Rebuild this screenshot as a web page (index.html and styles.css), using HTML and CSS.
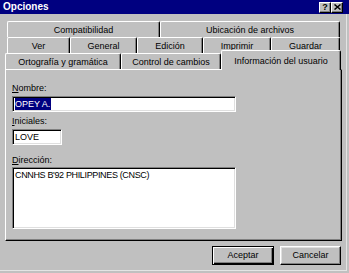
FILE: index.html
```html
<!DOCTYPE html>
<html>
<head>
<meta charset="utf-8">
<link rel="stylesheet" href="styles.css">
</head>
<body>
<div class="titlebar">
  <span class="title">Opciones</span>
  <div class="caption-buttons">
    <div class="cbtn">?</div>
    <div class="cbtn">
      <svg width="7" height="6" viewBox="0 0 7 6"><path d="M0.5 0.5L6.5 5.5M6.5 0.5L0.5 5.5" stroke="#000" stroke-width="1.5"/></svg>
    </div>
  </div>
</div>
<div class="client">
  <div class="tabs">
    <div class="tab-row row1">
      <div class="tab w153">Compatibilidad</div>
      <div class="tab w180">Ubicación de archivos</div>
    </div>
    <div class="tab-row row2">
      <div class="tab w63">Ver</div>
      <div class="tab w67">General</div>
      <div class="tab w66">Edición</div>
      <div class="tab w68">Imprimir</div>
      <div class="tab w69">Guardar</div>
    </div>
    <div class="tab-row row3">
      <div class="tab w116">Ortografía y gramática</div>
      <div class="tab w100">Control de cambios</div>
      <div class="tab w120 active">Información del usuario</div>
    </div>
  </div>
  <div class="panel">
    <div class="label"><u>N</u>ombre:</div>
    <div class="field name"><span class="sel">OPEY A.</span></div>
    <div class="label gap-iniciales"><u>I</u>niciales:</div>
    <div class="field initials">LOVE</div>
    <div class="label gap-direccion"><u>D</u>irección:</div>
    <div class="field address">CNNHS B'92 PHILIPPINES (CNSC)</div>
  </div>
  <div class="buttons">
    <div class="btn default">Aceptar</div>
    <div class="btn cancel">Cancelar</div>
  </div>
</div>
</body>
</html>
```
FILE: styles.css
```css
* { box-sizing: border-box; }
html, body { margin: 0; padding: 0; }
body {
  width: 349px;
  height: 273px;
  overflow: hidden;
  background: #c0c0c0;
  font-family: "Liberation Sans", Arial, sans-serif;
  font-size: 9px;
  color: #000;
}
.titlebar {
  height: 14px;
  background: #000080;
  display: flex;
  align-items: center;
  padding: 0 6px 0 3px;
}
.title {
  color: #fff;
  font-weight: bold;
  font-size: 10px;
  line-height: 14px;
}
.caption-buttons {
  margin-left: auto;
  display: flex;
}
.cbtn {
  width: 12px;
  height: 11px;
  background: #c0c0c0;
  border-top: 1px solid #fff;
  border-left: 1px solid #fff;
  border-right: 1px solid #000;
  border-bottom: 1px solid #000;
  box-shadow: inset -1px -1px #808080;
  display: flex;
  align-items: center;
  justify-content: center;
  font-weight: bold;
  font-size: 9px;
  line-height: 9px;
}
.cbtn svg { display: block; }
.client {
  width: 347px;
  height: 257px;
  padding-top: 7px;
  border-right: 1px solid #e4e4e4;
  border-bottom: 1px solid #e4e4e4;
}
.tab-row {
  display: flex;
  height: 16px;
}
.row1, .row2 { margin-left: 7px; }
.row3 {
  margin-left: 5px;
  align-items: flex-end;
  position: relative;
  z-index: 1;
}
.tab {
  height: 16px;
  border-top: 1px solid #fff;
  border-left: 1px solid #fff;
  border-right: 1px solid #000;
  box-shadow: inset -1px 0 #808080;
  border-radius: 2px 2px 0 0;
  text-align: center;
  padding-top: 3px;
  line-height: 11px;
  white-space: nowrap;
  background: #c0c0c0;
}
.tab.active {
  height: 20px;
  margin-bottom: -1px;
  padding-top: 5px;
}
.w153 { width: 153px; }
.w180 { width: 180px; }
.w63 { width: 63px; }
.w67 { width: 67px; }
.w66 { width: 66px; }
.w68 { width: 68px; }
.w69 { width: 69px; }
.w116 { width: 116px; }
.w100 { width: 100px; }
.w120 { width: 120px; }
.panel {
  margin-left: 5px;
  width: 337px;
  height: 172px;
  border-top: 1px solid #fff;
  border-left: 1px solid #fff;
  border-right: 1px solid #000;
  border-bottom: 1px solid #000;
  box-shadow: inset -1px -1px #808080;
  padding: 13px 0 0 6px;
}
.label { line-height: 11px; height: 11px; }
.gap-iniciales { margin-top: 4px; }
.gap-direccion { margin-top: 10px; }
.field {
  background: #fff;
  border-top: 1px solid #808080;
  border-left: 1px solid #808080;
  border-right: 1px solid #fff;
  border-bottom: 1px solid #fff;
  box-shadow: inset 1px 1px #000, inset -1px -1px #dfdfdf;
  padding: 1px 0 0 2px;
  line-height: 12px;
  white-space: nowrap;
}
.name { width: 224px; height: 16px; margin-top: 2px; }
.initials { width: 50px; height: 16px; margin-top: 2px; }
.address { width: 224px; height: 62px; margin-top: 1px; letter-spacing: -0.35px; }
.sel {
  display: inline-block;
  vertical-align: top;
  background: #000080;
  color: #fff;
  line-height: 12px;
  padding: 0 1px 0 0;
}
.buttons {
  display: flex;
  justify-content: flex-end;
  gap: 6px;
  margin-top: 5px;
  padding-right: 5px;
}
.btn {
  height: 19px;
  text-align: center;
  line-height: 17px;
  border-top: 1px solid #fff;
  border-left: 1px solid #fff;
  border-right: 1px solid #000;
  border-bottom: 1px solid #000;
  box-shadow: inset -1px -1px #808080, inset 1px 1px #dfdfdf;
}
.btn.default {
  width: 62px;
  border: 1px solid #000;
  box-shadow: inset 1px 1px #fff, inset -1px -1px #000, inset -2px -2px #808080;
}
.btn.cancel { width: 61px; }
```
